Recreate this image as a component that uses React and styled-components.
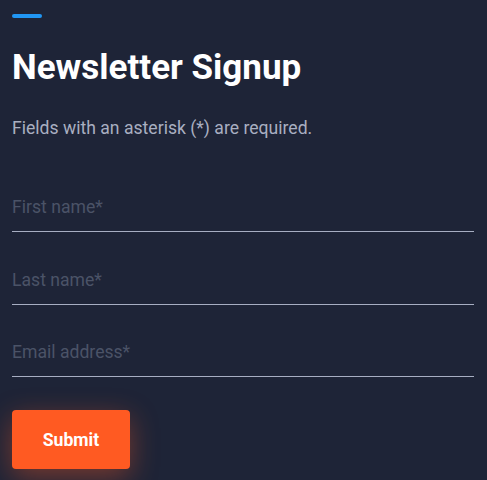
import styled, { createGlobalStyle } from "styled-components"

const GlobalStyle = createGlobalStyle`
  html, body {
    margin: 0;
    padding: 0;
    min-height: 100%;
    background-color: #1e2437;
  }
  * {
    box-sizing: border-box;
  }
`

const Container = styled.form`
  padding: 14px 13px 24px 12px;
  font-family: Roboto, "Liberation Sans", sans-serif;
  display: flex;
  flex-direction: column;
`

const Accent = styled.div`
  width: 30px;
  height: 4px;
  border-radius: 2px;
  background-color: #2196f3;
`

const Title = styled.h1`
  margin: 30px 0 0;
  font-size: 35px;
  line-height: 40px;
  font-weight: 700;
  color: #ffffff;
`

const Note = styled.p`
  margin: 27px 0 0;
  font-size: 17.6px;
  line-height: 26px;
  color: #a9afc1;
`

const Fields = styled.div`
  margin-top: 42px;
  display: flex;
  flex-direction: column;
  gap: 23.5px;
`

const Input = styled.input`
  width: 100%;
  height: 49px;
  padding: 0;
  border: none;
  border-bottom: 1px solid #a7aec2;
  background: transparent;
  font-family: inherit;
  font-size: 17.6px;
  color: #ffffff;
  outline: none;

  &::placeholder {
    color: #4b5367;
  }
`

const Submit = styled.button`
  margin-top: 33px;
  width: 118px;
  height: 59px;
  border: none;
  border-radius: 4px;
  background-color: #ff5a22;
  color: #ffffff;
  font-family: inherit;
  font-size: 17.6px;
  font-weight: 700;
  cursor: pointer;
  align-self: flex-start;
  box-shadow: 0 8px 28px rgba(255, 90, 34, 0.4);
`

const App = () => {
  return (
    <>
      <GlobalStyle />
      <Container onSubmit={(e) => e.preventDefault()}>
        <Accent />
        <Title>Newsletter Signup</Title>
        <Note>Fields with an asterisk (*) are required.</Note>
        <Fields>
          <Input type="text" placeholder="First name*" />
          <Input type="text" placeholder="Last name*" />
          <Input type="email" placeholder="Email address*" />
        </Fields>
        <Submit type="submit">Submit</Submit>
      </Container>
    </>
  )
}

export default App
